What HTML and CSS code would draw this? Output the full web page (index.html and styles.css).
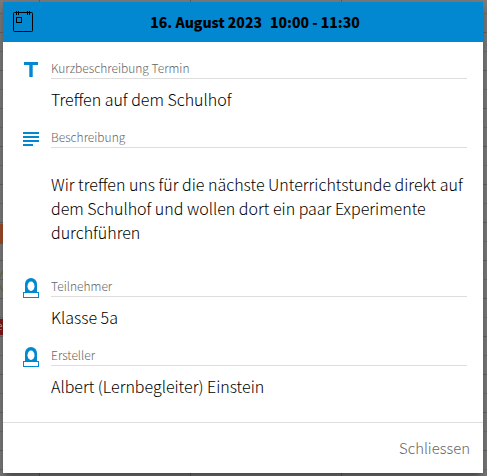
FILE: index.html
```html
<!DOCTYPE html>
<html lang="de">
<head>
    <meta charset="UTF-8">
    <meta name="viewport" content="width=device-width, initial-scale=1.0">
    <title>Termin</title>
    <link rel="stylesheet" href="styles.css">
</head>
<body>
<div class="calendar">
    <div class="event event-orange"></div>
    <div class="event event-red">e</div>
    <svg class="mark" width="10" height="26" viewBox="0 0 10 26" fill="none" stroke="#6c7355" stroke-width="1.5">
        <path d="M5 0C2 3 0 6 0 11s2 8 5 11"/>
    </svg>
</div>

<div class="modal">
    <div class="modal-header">
        <svg class="calendar-icon" width="20" height="22" viewBox="0 0 20 22" fill="none" stroke="#000">
            <rect x=".5" y="1.5" width="19" height="19" rx="1"/>
            <path d="M3.5 0v4M5.5 0v4M14.5 0v4M16.5 0v4"/>
            <rect x="3.5" y="6.5" width="5" height="5"/>
        </svg>
        <h1 class="title"><span>16. August 2023</span><span>10:00 - 11:30</span></h1>
    </div>

    <div class="modal-body">
        <div class="field">
            <svg class="icon" width="16" height="20" viewBox="0 0 16 20" fill="#0288d1">
                <path d="M1 2h14v3H9.700v12H6.300V5H1z"/>
            </svg>
            <div class="content">
                <div class="label">Kurzbeschreibung Termin</div>
                <div class="value">Treffen auf dem Schulhof</div>
            </div>
        </div>

        <div class="field">
            <svg class="icon" width="16" height="20" viewBox="0 0 16 20" fill="#0288d1">
                <path d="M0 3h16v2H0zM0 7h16v2H0zM0 11h16v2H0zM0 15h10v2H0z"/>
            </svg>
            <div class="content">
                <div class="label">Beschreibung</div>
                <div class="value description">
                    <p>Wir treffen uns für die nächste Unterrichtstunde direkt auf<br>dem Schulhof und wollen dort ein paar Experimente<br>durchführen</p>
                </div>
            </div>
        </div>

        <div class="field">
            <svg class="icon" width="16" height="20" viewBox="0 0 16 20">
                <path fill="#0288d1" d="M2 14V6a6 6 0 0 1 12 0v8z"/>
                <ellipse cx="8" cy="8.200" rx="3.500" ry="4.700" fill="#fff"/>
                <rect x=".5" y="14.500" width="15" height="5" fill="#fff" stroke="#0288d1"/>
            </svg>
            <div class="content">
                <div class="label">Teilnehmer</div>
                <div class="value">Klasse 5a</div>
            </div>
        </div>

        <div class="field">
            <svg class="icon" width="16" height="20" viewBox="0 0 16 20">
                <path fill="#0288d1" d="M2 14V6a6 6 0 0 1 12 0v8z"/>
                <ellipse cx="8" cy="8.200" rx="3.500" ry="4.700" fill="#fff"/>
                <rect x=".5" y="14.500" width="15" height="5" fill="#fff" stroke="#0288d1"/>
            </svg>
            <div class="content">
                <div class="label">Ersteller</div>
                <div class="value">Albert (Lernbegleiter) Einstein</div>
            </div>
        </div>
    </div>

    <div class="modal-footer">
        <button class="close">Schliessen</button>
    </div>
</div>
</body>
</html>
```

FILE: styles.css
```css
* {
    box-sizing: border-box;
}
body {
    margin: 0;
    padding: 2px 4px 3px 3px;
    height: 476px;
    overflow: hidden;
    background-color: #747474;
    font-family: "Noto Sans CJK SC", "Noto Sans", sans-serif;
    font-weight: 300;
    color: #000;
}

/* dimmed calendar behind the dialog */
.calendar {
    position: absolute;
    inset: 0;
    overflow: hidden;
    background:
        linear-gradient(#606060, #606060) 39px 0 / 1px 100% no-repeat,
        linear-gradient(#606060, #606060) 190px 0 / 1px 100% no-repeat,
        linear-gradient(#606060, #606060) 341px 0 / 1px 100% no-repeat,
        linear-gradient(#666 1px, transparent 1px) 0 32px / 100% 38px,
        repeating-linear-gradient(90deg, transparent 0 1px, #7d7d7d 1px 2px),
        linear-gradient(#666 1px, transparent 1px) 0 13px / 100% 38px,
        #7d7d7d;
}
.event {
    position: absolute;
    left: 0;
    width: 39px;
}
.event-orange {
    top: 224px;
    height: 20px;
    background-color: #a14d2a;
}
.event-red {
    top: 319px;
    height: 16px;
    background-color: #851b1b;
    color: #ccc;
    font-size: 10px;
    line-height: 14px;
    text-indent: -3px;
}
.mark {
    position: absolute;
    left: -1px;
    top: 270px;
}

.modal {
    position: relative;
    display: flex;
    flex-direction: column;
    height: 471px;
    background-color: #fff;
    box-shadow: 0 8px 10px 1px rgba(0,0,0,0.14), 0 3px 14px 2px rgba(0,0,0,0.12), 0 5px 5px -3px rgba(0,0,0,0.3);
}
.modal-header {
    display: flex;
    align-items: center;
    height: 40px;
    padding: 0 10px;
    background-color: #0288d1;
    color: #000;
}
.calendar-icon {
    flex: none;
    margin-right: -20px;
}
.title {
    flex: 1;
    display: flex;
    justify-content: center;
    gap: 8px;
    margin: 0;
    padding-left: 24px;
    font-size: 14px;
    font-weight: 900;
    line-height: 20px;
}
.modal-body {
    flex: 1;
    padding: 18px 16px 0 20px;
}
.field {
    display: flex;
    gap: 12px;
}
.icon {
    flex: none;
}
.content {
    flex: 1;
    min-width: 0;
}
.label {
    height: 19px;
    border-bottom: 1px solid #ddd;
    color: #666;
    font-size: 12px;
    line-height: 15px;
    white-space: nowrap;
}
.value {
    padding: 8px 0 18px;
    font-size: 16px;
    line-height: 24px;
    white-space: nowrap;
}
.description p {
    margin: 16px 0;
}
.modal-footer {
    display: flex;
    justify-content: flex-end;
    align-items: center;
    height: 51px;
    padding-right: 13px;
    border-top: 1px solid #ddd;
}
.close {
    padding: 0;
    border: none;
    background: none;
    color: #666;
    font-family: inherit;
    font-size: 14.9px;
    font-weight: 300;
    line-height: 24px;
    cursor: pointer;
}
```
